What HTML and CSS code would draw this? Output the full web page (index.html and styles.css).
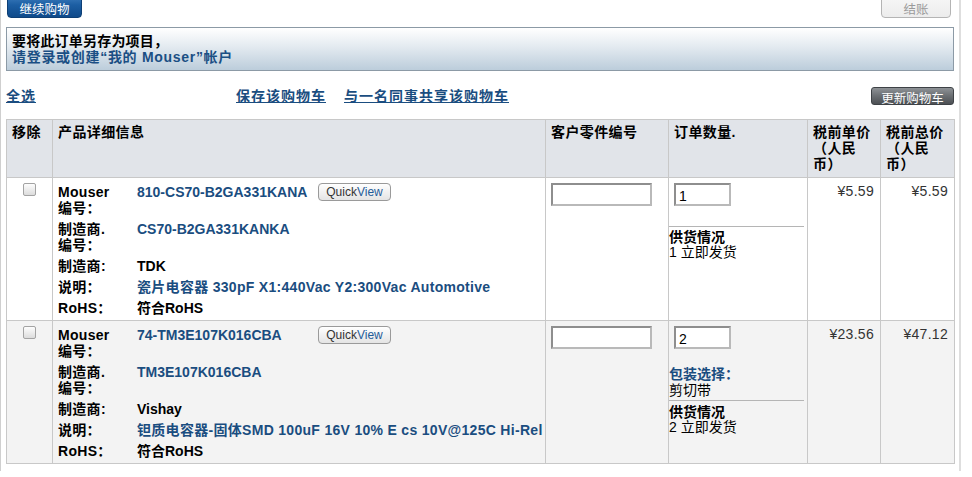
FILE: index.html
```html
<!DOCTYPE html>
<html lang="zh-CN">
<head>
<meta charset="utf-8">
<title>购物车</title>
<link rel="stylesheet" href="styles.css">
</head>
<body>
<div class="page">
  <div class="topbar">
    <button class="btn btn-blue">继续购物</button>
    <button class="btn btn-disabled">结账</button>
  </div>

  <div class="notice">
    <div class="notice-title">要将此订单另存为项目，</div>
    <a class="notice-link" href="#">请登录或创建“我的 Mouser”帐户</a>
  </div>

  <div class="actions">
    <a class="link select-all" href="#">全选</a>
    <a class="link" href="#">保存该购物车</a>
    <a class="link share" href="#">与一名同事共享该购物车</a>
    <button class="btn btn-gray">更新购物车</button>
  </div>

  <table class="cart">
    <colgroup>
      <col class="w-remove">
      <col class="w-detail">
      <col class="w-cpn">
      <col class="w-qty">
      <col class="w-unit">
      <col class="w-total">
    </colgroup>
    <thead>
      <tr>
        <th>移除</th>
        <th>产品详细信息</th>
        <th>客户零件编号</th>
        <th>订单数量.</th>
        <th>税前单价（人民币）</th>
        <th>税前总价（人民币）</th>
      </tr>
    </thead>
    <tbody>
      <tr>
        <td class="c-remove"><input type="checkbox" class="chk"></td>
        <td class="c-detail">
          <div class="detail">
            <div class="lbl">Mouser<br>编号：</div>
            <div class="val"><a href="#">810-CS70-B2GA331KANA</a></div>
            <div class="qv"><button class="quickview">Quick<span>View</span></button></div>
            <div class="lbl">制造商.<br>编号：</div>
            <div class="val span"><a href="#">CS70-B2GA331KANKA</a></div>
            <div class="lbl">制造商:</div>
            <div class="val span">TDK</div>
            <div class="lbl">说明：</div>
            <div class="val span desc"><a href="#">瓷片电容器 330pF X1:440Vac Y2:300Vac Automotive</a></div>
            <div class="lbl">RoHS：</div>
            <div class="val span">符合RoHS</div>
          </div>
        </td>
        <td class="c-cpn"><input type="text" class="field field-cpn"></td>
        <td class="c-qty">
          <input type="text" class="field field-qty" value="1">
          <div class="qty-spacer"></div>
          <div class="stock">
            <div class="stock-title">供货情况</div>
            <div>1 立即发货</div>
          </div>
        </td>
        <td class="c-price">¥5.59</td>
        <td class="c-price">¥5.59</td>
      </tr>
      <tr class="alt">
        <td class="c-remove"><input type="checkbox" class="chk"></td>
        <td class="c-detail">
          <div class="detail">
            <div class="lbl">Mouser<br>编号：</div>
            <div class="val"><a href="#">74-TM3E107K016CBA</a></div>
            <div class="qv"><button class="quickview">Quick<span>View</span></button></div>
            <div class="lbl">制造商.<br>编号：</div>
            <div class="val span"><a href="#">TM3E107K016CBA</a></div>
            <div class="lbl">制造商:</div>
            <div class="val span">Vishay</div>
            <div class="lbl">说明：</div>
            <div class="val span desc"><a href="#">钽质电容器-固体SMD 100uF 16V 10% E cs 10V@125C Hi-Rel</a></div>
            <div class="lbl">RoHS：</div>
            <div class="val span">符合RoHS</div>
          </div>
        </td>
        <td class="c-cpn"><input type="text" class="field field-cpn"></td>
        <td class="c-qty">
          <input type="text" class="field field-qty" value="2">
          <div class="pack">
            <div class="pack-title">包装选择：</div>
            <div>剪切带</div>
          </div>
          <div class="stock stock-after-pack">
            <div class="stock-title">供货情况</div>
            <div>2 立即发货</div>
          </div>
        </td>
        <td class="c-price">¥23.56</td>
        <td class="c-price">¥47.12</td>
      </tr>
    </tbody>
  </table>
</div>
</body>
</html>
```

FILE: styles.css
```css
html, body {
  margin: 0;
  padding: 0;
  background: #fff;
}

body {
  font-family: "Liberation Sans", Arial, "Noto Sans CJK SC", sans-serif;
  color: #000;
  font-size: 14px;
  overflow: hidden;
  text-spacing-trim: space-all;
}

a {
  color: #1a4d80;
  text-decoration: none;
}

.page {
  box-sizing: border-box;
  width: 961px;
  min-height: 100vh;
  padding: 0 5px 0 5px;
  border-left: 1px solid #cfcfcf;
  border-right: 2px solid #dedede;
}

/* top bar */
.topbar {
  display: flex;
  justify-content: space-between;
  margin-top: -6px;
}

.btn {
  font-family: "Liberation Sans", Arial, "Noto Sans CJK SC", sans-serif;
  font-size: 12.5px;
  height: 24px;
  padding: 4px 0 0;
  box-sizing: border-box;
  border-radius: 4px;
  cursor: pointer;
}

.btn-blue {
  width: 75px;
  margin-left: 1px;
  color: #fff;
  border: 1px solid #0d3f75;
  background: linear-gradient(#3f7fbf 0%, #1c5ea3 45%, #0f4a8a 100%);
}

.btn-disabled {
  width: 70px;
  margin-right: 3px;
  color: #9a9a9a;
  border: 1px solid #b4b4b4;
  background: linear-gradient(#f7f7f7, #ececec);
}

/* notice */
.notice {
  margin-top: 9px;
  padding: 5px 5px 5px 5px;
  border: 1px solid #8c9aa6;
  background: linear-gradient(#ffffff 0%, #e3eaf0 45%, #bccddb 100%);
  font-weight: bold;
  line-height: 16px;
}

.notice-title {
  color: #000;
  letter-spacing: 0.2px;
}

.notice-link {
  display: block;
  color: #1b4f84;
  letter-spacing: 0.7px;
}

/* actions */
.actions {
  display: flex;
  align-items: center;
  margin-top: 16px;
  height: 18px;
}

.link {
  font-weight: bold;
  text-decoration: underline;
  color: #1a4d80;
  line-height: 16px;
  letter-spacing: 1px;
}

.select-all {
  width: 230px;
}

.share {
  margin-left: 18px;
}

.btn-gray {
  margin-left: auto;
  width: 83px;
  height: 18px;
  padding: 0;
  color: #fff;
  border: 1px solid #3e4246;
  border-radius: 3px;
  background: linear-gradient(#8e9296 0%, #6a6e72 50%, #4c5054 100%);
}

/* table */
.cart {
  margin-top: 14px;
  width: 948px;
  border-collapse: collapse;
  table-layout: fixed;
}

.w-remove { width: 46px; }
.w-detail { width: 493px; }
.w-cpn { width: 123px; }
.w-qty { width: 139px; }
.w-unit { width: 73px; }
.w-total { width: 74px; }

.cart th,
.cart td {
  border: 1px solid #c8c8c8;
  vertical-align: top;
  text-align: left;
}

.cart th {
  background: #e1e4e9;
  font-weight: bold;
  line-height: 16px;
  height: 58px;
  box-sizing: border-box;
  padding: 4px 5px 0;
  letter-spacing: 0.4px;
}

.cart tbody tr.alt td {
  background: #f3f3f3;
}

.c-remove {
  text-align: center !important;
  padding: 0;
}

.chk {
  appearance: none;
  -webkit-appearance: none;
  display: block;
  width: 13px;
  height: 13px;
  margin: 5px auto 0;
  box-sizing: border-box;
  border: 1px solid #a3a3a3;
  border-radius: 2px;
  background: linear-gradient(#fdfdfd, #dcdcdc);
}

.c-detail {
  padding: 6px 5px 4px;
}

.detail {
  display: grid;
  grid-template-columns: 79px 181px 1fr;
  row-gap: 5px;
  line-height: 16px;
  font-weight: bold;
}

.lbl {
  grid-column: 1;
  letter-spacing: 0.3px;
}

.val a {
  color: #1a4d80;
}

.val.span {
  grid-column: 2 / 4;
  white-space: nowrap;
}

.desc {
  letter-spacing: 0.3px;
}

.qv {
  margin-top: -1px;
}

.quickview {
  width: 73px;
  height: 18px;
  padding: 0;
  font-family: "Liberation Sans", Arial, sans-serif;
  font-size: 12px;
  color: #333;
  border: 1px solid #9a9a9a;
  border-radius: 4px;
  background: linear-gradient(#ffffff, #e4e4e4);
}

.quickview span {
  color: #1f5c99;
}

.c-cpn {
  padding: 5px 0 0 5px;
}

.field {
  display: block;
  box-sizing: border-box;
  height: 23px;
  border-width: 2px;
  border-style: solid;
  border-color: #8e8e8e #b9b9b9 #b9b9b9 #8e8e8e;
  background: #fff;
  font-family: "Liberation Sans", Arial, sans-serif;
  font-size: 14px;
  padding: 2px 3px 0;
}

.field-cpn {
  width: 101px;
}

.field-qty {
  width: 57px;
  margin: 5px 0 0 5px;
}

.c-qty {
  padding: 0;
}

.qty-spacer {
  height: 20px;
  margin-right: 3px;
  border-bottom: 1px solid #b5b5b5;
}

.pack {
  margin: 17px 3px 0 0;
  padding-bottom: 2px;
  border-bottom: 1px solid #b5b5b5;
  line-height: 16px;
}

.pack-title {
  color: #1a4d80;
  font-weight: bold;
}

.stock {
  padding-top: 3px;
  line-height: 15px;
}

.stock-after-pack {
  padding-top: 4px;
}

.stock-title {
  font-weight: bold;
}

.c-price {
  text-align: right !important;
  padding: 5px 6px 0 0;
  font-size: 14px;
  line-height: 16px;
  letter-spacing: 0.3px;
  color: #333;
}
```
